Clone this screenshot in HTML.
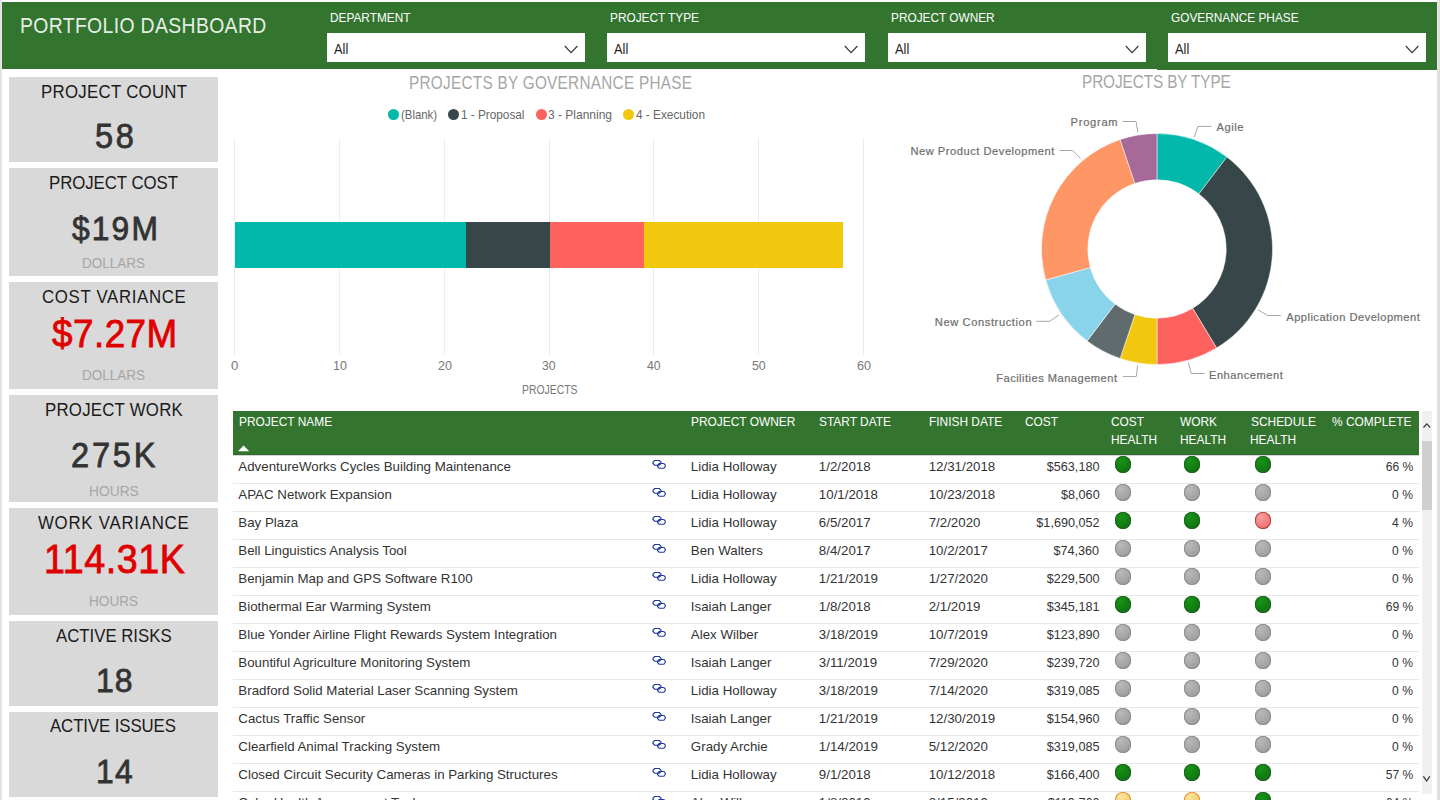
<!DOCTYPE html>
<html><head><meta charset="utf-8"><style>
html,body{margin:0;padding:0;width:1440px;height:800px;overflow:hidden;background:#fff;position:relative;font-family:"Liberation Sans", sans-serif;}
.t{position:absolute;white-space:nowrap;}
.r{position:absolute;}
</style></head><body>
<div class="r" style="left:0px;top:0px;width:1px;height:800px;background:#e0e0e0;"></div>
<div class="r" style="left:1px;top:0px;width:1px;height:800px;background:#ebe7ee;"></div>
<div class="r" style="left:1438px;top:0px;width:2px;height:70px;background:#e0e0e0;"></div>
<div class="r" style="left:1437px;top:0px;width:1px;height:70px;background:#ebe7ee;"></div>
<div class="r" style="left:1437px;top:70px;width:3px;height:730px;background:#e0e0e0;"></div>
<div class="r" style="left:2px;top:2px;width:1155px;height:67px;background:#33752f;"></div>
<div class="r" style="left:1157px;top:2px;width:280px;height:68px;background:#33752f;"></div>
<div class="t" style="left:20.05px;top:-4px;font-size:22.029px;line-height:60px;color:rgba(255,255,255,0.9);transform:scaleX(0.8800);transform-origin:0 0;letter-spacing:0.412px;">PORTFOLIO DASHBOARD</div>
<div class="t" style="left:329.65px;top:-12px;font-size:13.043px;line-height:60px;color:#fff;transform:scaleX(0.9081);transform-origin:0 0">DEPARTMENT</div>
<div class="r" style="left:327px;top:33px;width:258px;height:29px;background:#ffffff;"></div>
<div class="t" style="left:333.70px;top:20px;font-size:13.768px;line-height:60px;color:#252525;transform:scaleX(0.9314);transform-origin:0 0;">All</div>
<svg class="r" style="left:564px;top:44px" width="15" height="11"><path d="M0.8 2 L7.1 8.6 L13.4 2" fill="none" stroke="#333" stroke-width="1.1"/></svg>
<div class="t" style="left:609.65px;top:-12px;font-size:13.043px;line-height:60px;color:#fff;transform:scaleX(0.9081);transform-origin:0 0">PROJECT TYPE</div>
<div class="r" style="left:607px;top:33px;width:258px;height:29px;background:#ffffff;"></div>
<div class="t" style="left:613.70px;top:20px;font-size:13.768px;line-height:60px;color:#252525;transform:scaleX(0.9314);transform-origin:0 0;">All</div>
<svg class="r" style="left:844px;top:44px" width="15" height="11"><path d="M0.8 2 L7.1 8.6 L13.4 2" fill="none" stroke="#333" stroke-width="1.1"/></svg>
<div class="t" style="left:890.65px;top:-12px;font-size:13.043px;line-height:60px;color:#fff;transform:scaleX(0.9081);transform-origin:0 0">PROJECT OWNER</div>
<div class="r" style="left:888px;top:33px;width:258px;height:29px;background:#ffffff;"></div>
<div class="t" style="left:894.70px;top:20px;font-size:13.768px;line-height:60px;color:#252525;transform:scaleX(0.9314);transform-origin:0 0;">All</div>
<svg class="r" style="left:1125px;top:44px" width="15" height="11"><path d="M0.8 2 L7.1 8.6 L13.4 2" fill="none" stroke="#333" stroke-width="1.1"/></svg>
<div class="t" style="left:1170.65px;top:-12px;font-size:13.043px;line-height:60px;color:#fff;transform:scaleX(0.9081);transform-origin:0 0">GOVERNANCE PHASE</div>
<div class="r" style="left:1168px;top:33px;width:258px;height:29px;background:#ffffff;"></div>
<div class="t" style="left:1174.70px;top:20px;font-size:13.768px;line-height:60px;color:#252525;transform:scaleX(0.9314);transform-origin:0 0;">All</div>
<svg class="r" style="left:1405px;top:44px" width="15" height="11"><path d="M0.8 2 L7.1 8.6 L13.4 2" fill="none" stroke="#333" stroke-width="1.1"/></svg>
<div class="r" style="left:9px;top:77px;width:209px;height:85px;background:#d9d9d9;"></div>
<div class="r" style="left:9px;top:168px;width:209px;height:108px;background:#d9d9d9;"></div>
<div class="r" style="left:9px;top:282px;width:209px;height:107px;background:#d9d9d9;"></div>
<div class="r" style="left:9px;top:395px;width:209px;height:107px;background:#d9d9d9;"></div>
<div class="r" style="left:9px;top:508px;width:209px;height:107px;background:#d9d9d9;"></div>
<div class="r" style="left:9px;top:621px;width:209px;height:85px;background:#d9d9d9;"></div>
<div class="r" style="left:9px;top:712px;width:209px;height:85px;background:#d9d9d9;"></div>
<div class="t" style="left:40.55px;top:62px;font-size:18.696px;line-height:60px;color:#1a1a1a;transform:scaleX(0.9000);transform-origin:0 0;letter-spacing:0.315px;">PROJECT COUNT</div>
<div class="t" style="left:49.15px;top:153px;font-size:18.696px;line-height:60px;color:#1a1a1a;transform:scaleX(0.9000);transform-origin:0 0;letter-spacing:-0.067px;">PROJECT COST</div>
<div class="t" style="left:41.91px;top:267px;font-size:18.696px;line-height:60px;color:#1a1a1a;transform:scaleX(0.9000);transform-origin:0 0;letter-spacing:0.731px;">COST VARIANCE</div>
<div class="t" style="left:44.90px;top:380px;font-size:18.696px;line-height:60px;color:#1a1a1a;transform:scaleX(0.9000);transform-origin:0 0;letter-spacing:0.259px;">PROJECT WORK</div>
<div class="t" style="left:38.02px;top:493px;font-size:18.696px;line-height:60px;color:#1a1a1a;transform:scaleX(0.9000);transform-origin:0 0;letter-spacing:0.833px;">WORK VARIANCE</div>
<div class="t" style="left:55.80px;top:606px;font-size:18.696px;line-height:60px;color:#1a1a1a;transform:scaleX(0.9000);transform-origin:0 0;letter-spacing:-0.028px;">ACTIVE RISKS</div>
<div class="t" style="left:50.30px;top:696px;font-size:18.696px;line-height:60px;color:#1a1a1a;transform:scaleX(0.9000);transform-origin:0 0;letter-spacing:-0.108px;">ACTIVE ISSUES</div>
<div class="t" style="left:95.40px;top:106px;font-size:34.648px;line-height:60px;color:#333333;transform:scaleX(0.9400);transform-origin:0 0;letter-spacing:2.930px;-webkit-text-stroke:0.8px #333333;">58</div>
<div class="t" style="left:71.88px;top:198px;font-size:33.803px;line-height:60px;color:#333333;transform:scaleX(0.9400);transform-origin:0 0;letter-spacing:2.278px;-webkit-text-stroke:0.8px #333333;">$19M</div>
<div class="t" style="left:52.13px;top:304px;font-size:39.155px;line-height:60px;color:#e00000;transform:scaleX(0.9400);transform-origin:0 0;letter-spacing:0.525px;-webkit-text-stroke:0.8px #e00000;">$7.27M</div>
<div class="t" style="left:71.47px;top:425px;font-size:34.648px;line-height:60px;color:#333333;transform:scaleX(0.9400);transform-origin:0 0;letter-spacing:2.981px;-webkit-text-stroke:0.8px #333333;">275K</div>
<div class="t" style="left:44.08px;top:529px;font-size:40.000px;line-height:60px;color:#e00000;transform:scaleX(0.9400);transform-origin:0 0;letter-spacing:0.613px;-webkit-text-stroke:0.8px #e00000;">114.31K</div>
<div class="t" style="left:96.11px;top:650px;font-size:33.944px;line-height:60px;color:#333333;transform:scaleX(0.9400);transform-origin:0 0;letter-spacing:1.120px;-webkit-text-stroke:0.8px #333333;">18</div>
<div class="t" style="left:96.12px;top:741px;font-size:33.803px;line-height:60px;color:#333333;transform:scaleX(0.9400);transform-origin:0 0;letter-spacing:1.347px;-webkit-text-stroke:0.8px #333333;">14</div>
<div class="t" style="left:82.22px;top:233px;font-size:14.638px;line-height:60px;color:#a6a6a6;transform:scaleX(0.9224);transform-origin:0 0;">DOLLARS</div>
<div class="t" style="left:82.02px;top:345px;font-size:14.638px;line-height:60px;color:#a6a6a6;transform:scaleX(0.9224);transform-origin:0 0;">DOLLARS</div>
<div class="t" style="left:88.90px;top:461px;font-size:14.638px;line-height:60px;color:#a6a6a6;transform:scaleX(0.9429);transform-origin:0 0;">HOURS</div>
<div class="t" style="left:88.91px;top:571px;font-size:14.638px;line-height:60px;color:#a6a6a6;transform:scaleX(0.9311);transform-origin:0 0;">HOURS</div>
<div class="t" style="left:409.17px;top:53px;font-size:18.261px;line-height:60px;color:#a6a6a6;transform:scaleX(0.8400);transform-origin:0 0;letter-spacing:0.320px;">PROJECTS BY GOVERNANCE PHASE</div>
<div class="r" style="left:387.80px;top:109.10px;width:11.2px;height:11.2px;border-radius:50%;background:#01b8aa"></div>
<div class="t" style="left:400.57px;top:85px;font-size:12.464px;line-height:60px;color:#666666;transform:scaleX(0.9156);transform-origin:0 0;">(Blank)</div>
<div class="r" style="left:447.80px;top:109.10px;width:11.2px;height:11.2px;border-radius:50%;background:#374649"></div>
<div class="t" style="left:461.02px;top:85px;font-size:12.464px;line-height:60px;color:#666666;transform:scaleX(0.9452);transform-origin:0 0;">1 - Proposal</div>
<div class="r" style="left:535.70px;top:109.10px;width:11.2px;height:11.2px;border-radius:50%;background:#fd625e"></div>
<div class="t" style="left:548.27px;top:85px;font-size:12.464px;line-height:60px;color:#666666;transform:scaleX(0.9626);transform-origin:0 0;">3 - Planning</div>
<div class="r" style="left:623.00px;top:109.10px;width:11.2px;height:11.2px;border-radius:50%;background:#f2c80f"></div>
<div class="t" style="left:635.76px;top:85px;font-size:12.464px;line-height:60px;color:#666666;transform:scaleX(0.9488);transform-origin:0 0;">4 - Execution</div>
<div class="r" style="left:234px;top:138px;width:1px;height:217px;background:#ededed;"></div>
<div class="r" style="left:339px;top:138px;width:1px;height:217px;background:#ededed;"></div>
<div class="r" style="left:444px;top:138px;width:1px;height:217px;background:#ededed;"></div>
<div class="r" style="left:549px;top:138px;width:1px;height:217px;background:#ededed;"></div>
<div class="r" style="left:653px;top:138px;width:1px;height:217px;background:#ededed;"></div>
<div class="r" style="left:758px;top:138px;width:1px;height:217px;background:#ededed;"></div>
<div class="r" style="left:863px;top:138px;width:1px;height:217px;background:#ededed;"></div>
<div class="t" style="left:231.17px;top:336px;font-size:12.609px;line-height:60px;color:#777777;transform:scaleX(1.0409);transform-origin:0 0;">0</div>
<div class="t" style="left:332.76px;top:336px;font-size:12.609px;line-height:60px;color:#777777;transform:scaleX(0.9914);transform-origin:0 0;">10</div>
<div class="t" style="left:437.67px;top:336px;font-size:12.609px;line-height:60px;color:#777777;transform:scaleX(0.9981);transform-origin:0 0;">20</div>
<div class="t" style="left:542.31px;top:336px;font-size:12.609px;line-height:60px;color:#777777;transform:scaleX(0.9732);transform-origin:0 0;">30</div>
<div class="t" style="left:647.36px;top:336px;font-size:12.609px;line-height:60px;color:#777777;transform:scaleX(0.9698);transform-origin:0 0;">40</div>
<div class="t" style="left:752.01px;top:336px;font-size:12.609px;line-height:60px;color:#777777;transform:scaleX(0.9808);transform-origin:0 0;">50</div>
<div class="t" style="left:856.67px;top:336px;font-size:12.609px;line-height:60px;color:#777777;transform:scaleX(0.9981);transform-origin:0 0;">60</div>
<div class="r" style="left:235px;top:222px;width:231px;height:46px;background:#01b8aa;"></div>
<div class="r" style="left:466px;top:222px;width:84px;height:46px;background:#374649;"></div>
<div class="r" style="left:550px;top:222px;width:94px;height:46px;background:#fd625e;"></div>
<div class="r" style="left:644px;top:222px;width:199px;height:46px;background:#f2c80f;"></div>
<div class="t" style="left:521.57px;top:360px;font-size:12.754px;line-height:60px;color:#777777;transform:scaleX(0.8150);transform-origin:0 0;">PROJECTS</div>
<div class="t" style="left:1082.27px;top:52px;font-size:18.261px;line-height:60px;color:#a6a6a6;transform:scaleX(0.8400);transform-origin:0 0;letter-spacing:-0.110px;">PROJECTS BY TYPE</div>
<svg class="r" style="left:1027px;top:119.3px" width="260" height="260" viewBox="1027 119.3 260 260"><path d="M1157.00,133.80 A115.5,115.5 0 0 1 1226.90,157.35 L1198.88,194.21 A69.2,69.2 0 0 0 1157.00,180.10 Z" fill="#01b8aa" stroke="#fff" stroke-width="0.5"/><path d="M1226.90,157.35 A115.5,115.5 0 0 1 1216.55,348.27 L1192.68,308.59 A69.2,69.2 0 0 0 1198.88,194.21 Z" fill="#374649" stroke="#fff" stroke-width="0.5"/><path d="M1216.55,348.27 A115.5,115.5 0 0 1 1157.00,364.80 L1157.00,318.50 A69.2,69.2 0 0 0 1192.68,308.59 Z" fill="#fd625e" stroke="#fff" stroke-width="0.5"/><path d="M1157.00,364.80 A115.5,115.5 0 0 1 1120.12,358.75 L1134.90,314.88 A69.2,69.2 0 0 0 1157.00,318.50 Z" fill="#f2c80f" stroke="#fff" stroke-width="0.5"/><path d="M1120.12,358.75 A115.5,115.5 0 0 1 1087.10,341.25 L1115.12,304.39 A69.2,69.2 0 0 0 1134.90,314.88 Z" fill="#5f6b6d" stroke="#fff" stroke-width="0.5"/><path d="M1087.10,341.25 A115.5,115.5 0 0 1 1045.71,280.20 L1090.32,267.81 A69.2,69.2 0 0 0 1115.12,304.39 Z" fill="#8ad4eb" stroke="#fff" stroke-width="0.5"/><path d="M1045.71,280.20 A115.5,115.5 0 0 1 1120.12,139.85 L1134.90,183.72 A69.2,69.2 0 0 0 1090.32,267.81 Z" fill="#fe9666" stroke="#fff" stroke-width="0.5"/><path d="M1120.12,139.85 A115.5,115.5 0 0 1 1157.00,133.80 L1157.00,180.10 A69.2,69.2 0 0 0 1134.90,183.72 Z" fill="#a66999" stroke="#fff" stroke-width="0.5"/></svg>
<svg class="r" style="left:0;top:0" width="1440" height="800"><polyline points="1194.3,137 1197.9,126.4 1211.4,126.4" fill="none" stroke="#a6a6a6" stroke-width="1"/><polyline points="1137.8,132.4 1136.1,121.5 1122.7,121.5" fill="none" stroke="#a6a6a6" stroke-width="1"/><polyline points="1080.6,158.5 1072.7,150.5 1059.7,150.5" fill="none" stroke="#a6a6a6" stroke-width="1"/><polyline points="1058.9,314.9 1049.6,321.3 1036.2,321.3" fill="none" stroke="#a6a6a6" stroke-width="1"/><polyline points="1137.7,365.4 1136.2,376.6 1122.8,376.6" fill="none" stroke="#a6a6a6" stroke-width="1"/><polyline points="1188.3,362.7 1191.3,373.5 1204.7,373.5" fill="none" stroke="#a6a6a6" stroke-width="1"/><polyline points="1258.1,309.8 1267.7,315.5 1280.7,315.5" fill="none" stroke="#a6a6a6" stroke-width="1"/></svg>
<div class="t" style="left:1216.40px;top:97px;font-size:11.159px;line-height:60px;color:#6e6e6e;transform:scaleX(1.0000);transform-origin:0 0;letter-spacing:0.568px;-webkit-text-stroke:0.2px #6e6e6e;">Agile</div>
<div class="t" style="left:1070.61px;top:92px;font-size:11.159px;line-height:60px;color:#6e6e6e;transform:scaleX(1.0000);transform-origin:0 0;letter-spacing:0.720px;-webkit-text-stroke:0.2px #6e6e6e;">Program</div>
<div class="t" style="left:910.41px;top:121px;font-size:11.159px;line-height:60px;color:#6e6e6e;transform:scaleX(1.0000);transform-origin:0 0;letter-spacing:0.521px;-webkit-text-stroke:0.2px #6e6e6e;">New Product Development</div>
<div class="t" style="left:934.81px;top:292px;font-size:11.159px;line-height:60px;color:#6e6e6e;transform:scaleX(1.0000);transform-origin:0 0;letter-spacing:0.591px;-webkit-text-stroke:0.2px #6e6e6e;">New Construction</div>
<div class="t" style="left:996.21px;top:348px;font-size:11.159px;line-height:60px;color:#6e6e6e;transform:scaleX(1.0000);transform-origin:0 0;letter-spacing:0.468px;-webkit-text-stroke:0.2px #6e6e6e;">Facilities Management</div>
<div class="t" style="left:1209.01px;top:345px;font-size:11.159px;line-height:60px;color:#6e6e6e;transform:scaleX(1.0000);transform-origin:0 0;letter-spacing:0.499px;-webkit-text-stroke:0.2px #6e6e6e;">Enhancement</div>
<div class="t" style="left:1286.25px;top:287px;font-size:11.159px;line-height:60px;color:#6e6e6e;transform:scaleX(1.0000);transform-origin:0 0;letter-spacing:0.467px;-webkit-text-stroke:0.2px #6e6e6e;">Application Development</div>
<div class="r" style="left:233px;top:411px;width:1186px;height:44px;background:#33752f;"></div>
<div class="r" style="left:233px;top:454px;width:1186px;height:1px;background:#2b6d29;"></div>
<div class="r" style="left:233px;top:455px;width:1186px;height:1px;background:#d6d2d9;"></div>
<div class="t" style="left:238.85px;top:392px;font-size:13.188px;line-height:60px;color:#fff;transform:scaleX(0.9046);transform-origin:0 0">PROJECT NAME</div>
<div class="t" style="left:690.85px;top:392px;font-size:13.188px;line-height:60px;color:#fff;transform:scaleX(0.9046);transform-origin:0 0">PROJECT OWNER</div>
<div class="t" style="left:819.26px;top:392px;font-size:13.188px;line-height:60px;color:#fff;transform:scaleX(0.9046);transform-origin:0 0">START DATE</div>
<div class="t" style="left:928.65px;top:392px;font-size:13.188px;line-height:60px;color:#fff;transform:scaleX(0.9046);transform-origin:0 0">FINISH DATE</div>
<div class="t" style="left:1024.50px;top:392px;font-size:13.188px;line-height:60px;color:#fff;transform:scaleX(0.9046);transform-origin:0 0">COST</div>
<div class="t" style="left:1111.00px;top:392px;font-size:13.188px;line-height:60px;color:#fff;transform:scaleX(0.9046);transform-origin:0 0">COST</div>
<div class="t" style="left:1110.65px;top:410px;font-size:13.188px;line-height:60px;color:#fff;transform:scaleX(0.9046);transform-origin:0 0">HEALTH</div>
<div class="t" style="left:1180.44px;top:392px;font-size:13.188px;line-height:60px;color:#fff;transform:scaleX(0.9046);transform-origin:0 0">WORK</div>
<div class="t" style="left:1179.55px;top:410px;font-size:13.188px;line-height:60px;color:#fff;transform:scaleX(0.9046);transform-origin:0 0">HEALTH</div>
<div class="t" style="left:1250.56px;top:392px;font-size:13.188px;line-height:60px;color:#fff;transform:scaleX(0.9046);transform-origin:0 0">SCHEDULE</div>
<div class="t" style="left:1250.15px;top:410px;font-size:13.188px;line-height:60px;color:#fff;transform:scaleX(0.9046);transform-origin:0 0">HEALTH</div>
<div class="t" style="left:1332.38px;top:392px;font-size:13.188px;line-height:60px;color:#fff;transform:scaleX(0.9046);transform-origin:0 0">% COMPLETE</div>
<svg class="r" style="left:237px;top:444px" width="14" height="9"><path d="M1 7.2 L6.6 1.6 L12.2 7.2 Z" fill="#fff"/></svg>
<div class="t" style="left:238.37px;top:437px;font-size:13.3px;line-height:60px;color:#333333;">AdventureWorks Cycles Building Maintenance</div>
<svg class="r" style="left:651px;top:459px" width="16" height="12"><path d="M3.6,1.5 H8.4 L10,3.3 V4.5 L8.4,6.25 H3.6 L2,4.5 V3.3 Z M8.1,4.5 H12.9 L14.25,6.2 V7.5 L12.9,9.25 H8.1 L6.5,7.5 V6.2 Z" fill="none" stroke="#1f3c9e" stroke-width="1.15"/></svg>
<div class="t" style="left:690.87px;top:437px;font-size:13.3px;line-height:60px;color:#333333;">Lidia Holloway</div>
<div class="t" style="left:818.87px;top:437px;font-size:13.3px;line-height:60px;color:#333333;">1/2/2018</div>
<div class="t" style="left:928.67px;top:437px;font-size:13.3px;line-height:60px;color:#333333;">12/31/2018</div>
<div class="t" style="right:340.80px;text-align:right;top:437px;font-size:13.3px;line-height:60px;color:#333333;transform:scaleX(0.95);transform-origin:100% 0;">$563,180</div>
<div class="r" style="left:1115.1px;top:456.2px;width:16.4px;height:16.4px;border-radius:50%;background:radial-gradient(circle at 35% 30%, #169416 0%, #127c12 55%, #1d5e1d 100%);box-shadow:inset 0 0 0 0.8px #1f5f1f"></div>
<div class="r" style="left:1184.0px;top:456.2px;width:16.4px;height:16.4px;border-radius:50%;background:radial-gradient(circle at 35% 30%, #169416 0%, #127c12 55%, #1d5e1d 100%);box-shadow:inset 0 0 0 0.8px #1f5f1f"></div>
<div class="r" style="left:1254.8px;top:456.2px;width:16.4px;height:16.4px;border-radius:50%;background:radial-gradient(circle at 35% 30%, #169416 0%, #127c12 55%, #1d5e1d 100%);box-shadow:inset 0 0 0 0.8px #1f5f1f"></div>
<div class="t" style="right:27.20px;text-align:right;top:437px;font-size:13.3px;line-height:60px;color:#333333;transform:scaleX(0.91);transform-origin:100% 0;">66 %</div>
<div class="r" style="left:233px;top:483px;width:1186px;height:1px;background:#e8e8e8;"></div>
<div class="t" style="left:238.37px;top:465px;font-size:13.3px;line-height:60px;color:#333333;">APAC Network Expansion</div>
<svg class="r" style="left:651px;top:487px" width="16" height="12"><path d="M3.6,1.5 H8.4 L10,3.3 V4.5 L8.4,6.25 H3.6 L2,4.5 V3.3 Z M8.1,4.5 H12.9 L14.25,6.2 V7.5 L12.9,9.25 H8.1 L6.5,7.5 V6.2 Z" fill="none" stroke="#1f3c9e" stroke-width="1.15"/></svg>
<div class="t" style="left:690.87px;top:465px;font-size:13.3px;line-height:60px;color:#333333;">Lidia Holloway</div>
<div class="t" style="left:818.87px;top:465px;font-size:13.3px;line-height:60px;color:#333333;">10/1/2018</div>
<div class="t" style="left:928.67px;top:465px;font-size:13.3px;line-height:60px;color:#333333;">10/23/2018</div>
<div class="t" style="right:340.80px;text-align:right;top:465px;font-size:13.3px;line-height:60px;color:#333333;transform:scaleX(0.95);transform-origin:100% 0;">$8,060</div>
<div class="r" style="left:1115.1px;top:484.2px;width:16.4px;height:16.4px;border-radius:50%;background:radial-gradient(circle at 35% 30%, #b9b9b9 0%, #a3a3a3 60%, #8a8a8a 100%);box-shadow:inset 0 0 0 0.8px #8a8a8a"></div>
<div class="r" style="left:1184.0px;top:484.2px;width:16.4px;height:16.4px;border-radius:50%;background:radial-gradient(circle at 35% 30%, #b9b9b9 0%, #a3a3a3 60%, #8a8a8a 100%);box-shadow:inset 0 0 0 0.8px #8a8a8a"></div>
<div class="r" style="left:1254.8px;top:484.2px;width:16.4px;height:16.4px;border-radius:50%;background:radial-gradient(circle at 35% 30%, #b9b9b9 0%, #a3a3a3 60%, #8a8a8a 100%);box-shadow:inset 0 0 0 0.8px #8a8a8a"></div>
<div class="t" style="right:27.20px;text-align:right;top:465px;font-size:13.3px;line-height:60px;color:#333333;transform:scaleX(0.91);transform-origin:100% 0;">0 %</div>
<div class="r" style="left:233px;top:511px;width:1186px;height:1px;background:#e8e8e8;"></div>
<div class="t" style="left:238.37px;top:493px;font-size:13.3px;line-height:60px;color:#333333;">Bay Plaza</div>
<svg class="r" style="left:651px;top:515px" width="16" height="12"><path d="M3.6,1.5 H8.4 L10,3.3 V4.5 L8.4,6.25 H3.6 L2,4.5 V3.3 Z M8.1,4.5 H12.9 L14.25,6.2 V7.5 L12.9,9.25 H8.1 L6.5,7.5 V6.2 Z" fill="none" stroke="#1f3c9e" stroke-width="1.15"/></svg>
<div class="t" style="left:690.87px;top:493px;font-size:13.3px;line-height:60px;color:#333333;">Lidia Holloway</div>
<div class="t" style="left:818.87px;top:493px;font-size:13.3px;line-height:60px;color:#333333;">6/5/2017</div>
<div class="t" style="left:928.67px;top:493px;font-size:13.3px;line-height:60px;color:#333333;">7/2/2020</div>
<div class="t" style="right:340.80px;text-align:right;top:493px;font-size:13.3px;line-height:60px;color:#333333;transform:scaleX(0.95);transform-origin:100% 0;">$1,690,052</div>
<div class="r" style="left:1115.1px;top:512.2px;width:16.4px;height:16.4px;border-radius:50%;background:radial-gradient(circle at 35% 30%, #169416 0%, #127c12 55%, #1d5e1d 100%);box-shadow:inset 0 0 0 0.8px #1f5f1f"></div>
<div class="r" style="left:1184.0px;top:512.2px;width:16.4px;height:16.4px;border-radius:50%;background:radial-gradient(circle at 35% 30%, #169416 0%, #127c12 55%, #1d5e1d 100%);box-shadow:inset 0 0 0 0.8px #1f5f1f"></div>
<div class="r" style="left:1254.8px;top:512.2px;width:16.4px;height:16.4px;border-radius:50%;background:radial-gradient(circle at 35% 30%, #f7a0a0 0%, #f17878 60%, #d85050 100%);box-shadow:inset 0 0 0 0.8px #a04030"></div>
<div class="t" style="right:27.20px;text-align:right;top:493px;font-size:13.3px;line-height:60px;color:#333333;transform:scaleX(0.91);transform-origin:100% 0;">4 %</div>
<div class="r" style="left:233px;top:539px;width:1186px;height:1px;background:#e8e8e8;"></div>
<div class="t" style="left:238.37px;top:521px;font-size:13.3px;line-height:60px;color:#333333;">Bell Linguistics Analysis Tool</div>
<svg class="r" style="left:651px;top:543px" width="16" height="12"><path d="M3.6,1.5 H8.4 L10,3.3 V4.5 L8.4,6.25 H3.6 L2,4.5 V3.3 Z M8.1,4.5 H12.9 L14.25,6.2 V7.5 L12.9,9.25 H8.1 L6.5,7.5 V6.2 Z" fill="none" stroke="#1f3c9e" stroke-width="1.15"/></svg>
<div class="t" style="left:690.87px;top:521px;font-size:13.3px;line-height:60px;color:#333333;">Ben Walters</div>
<div class="t" style="left:818.87px;top:521px;font-size:13.3px;line-height:60px;color:#333333;">8/4/2017</div>
<div class="t" style="left:928.67px;top:521px;font-size:13.3px;line-height:60px;color:#333333;">10/2/2017</div>
<div class="t" style="right:340.80px;text-align:right;top:521px;font-size:13.3px;line-height:60px;color:#333333;transform:scaleX(0.95);transform-origin:100% 0;">$74,360</div>
<div class="r" style="left:1115.1px;top:540.2px;width:16.4px;height:16.4px;border-radius:50%;background:radial-gradient(circle at 35% 30%, #b9b9b9 0%, #a3a3a3 60%, #8a8a8a 100%);box-shadow:inset 0 0 0 0.8px #8a8a8a"></div>
<div class="r" style="left:1184.0px;top:540.2px;width:16.4px;height:16.4px;border-radius:50%;background:radial-gradient(circle at 35% 30%, #b9b9b9 0%, #a3a3a3 60%, #8a8a8a 100%);box-shadow:inset 0 0 0 0.8px #8a8a8a"></div>
<div class="r" style="left:1254.8px;top:540.2px;width:16.4px;height:16.4px;border-radius:50%;background:radial-gradient(circle at 35% 30%, #b9b9b9 0%, #a3a3a3 60%, #8a8a8a 100%);box-shadow:inset 0 0 0 0.8px #8a8a8a"></div>
<div class="t" style="right:27.20px;text-align:right;top:521px;font-size:13.3px;line-height:60px;color:#333333;transform:scaleX(0.91);transform-origin:100% 0;">0 %</div>
<div class="r" style="left:233px;top:567px;width:1186px;height:1px;background:#e8e8e8;"></div>
<div class="t" style="left:238.37px;top:549px;font-size:13.3px;line-height:60px;color:#333333;">Benjamin Map and GPS Software R100</div>
<svg class="r" style="left:651px;top:571px" width="16" height="12"><path d="M3.6,1.5 H8.4 L10,3.3 V4.5 L8.4,6.25 H3.6 L2,4.5 V3.3 Z M8.1,4.5 H12.9 L14.25,6.2 V7.5 L12.9,9.25 H8.1 L6.5,7.5 V6.2 Z" fill="none" stroke="#1f3c9e" stroke-width="1.15"/></svg>
<div class="t" style="left:690.87px;top:549px;font-size:13.3px;line-height:60px;color:#333333;">Lidia Holloway</div>
<div class="t" style="left:818.87px;top:549px;font-size:13.3px;line-height:60px;color:#333333;">1/21/2019</div>
<div class="t" style="left:928.67px;top:549px;font-size:13.3px;line-height:60px;color:#333333;">1/27/2020</div>
<div class="t" style="right:340.80px;text-align:right;top:549px;font-size:13.3px;line-height:60px;color:#333333;transform:scaleX(0.95);transform-origin:100% 0;">$229,500</div>
<div class="r" style="left:1115.1px;top:568.2px;width:16.4px;height:16.4px;border-radius:50%;background:radial-gradient(circle at 35% 30%, #b9b9b9 0%, #a3a3a3 60%, #8a8a8a 100%);box-shadow:inset 0 0 0 0.8px #8a8a8a"></div>
<div class="r" style="left:1184.0px;top:568.2px;width:16.4px;height:16.4px;border-radius:50%;background:radial-gradient(circle at 35% 30%, #b9b9b9 0%, #a3a3a3 60%, #8a8a8a 100%);box-shadow:inset 0 0 0 0.8px #8a8a8a"></div>
<div class="r" style="left:1254.8px;top:568.2px;width:16.4px;height:16.4px;border-radius:50%;background:radial-gradient(circle at 35% 30%, #b9b9b9 0%, #a3a3a3 60%, #8a8a8a 100%);box-shadow:inset 0 0 0 0.8px #8a8a8a"></div>
<div class="t" style="right:27.20px;text-align:right;top:549px;font-size:13.3px;line-height:60px;color:#333333;transform:scaleX(0.91);transform-origin:100% 0;">0 %</div>
<div class="r" style="left:233px;top:595px;width:1186px;height:1px;background:#e8e8e8;"></div>
<div class="t" style="left:238.37px;top:577px;font-size:13.3px;line-height:60px;color:#333333;">Biothermal Ear Warming System</div>
<svg class="r" style="left:651px;top:599px" width="16" height="12"><path d="M3.6,1.5 H8.4 L10,3.3 V4.5 L8.4,6.25 H3.6 L2,4.5 V3.3 Z M8.1,4.5 H12.9 L14.25,6.2 V7.5 L12.9,9.25 H8.1 L6.5,7.5 V6.2 Z" fill="none" stroke="#1f3c9e" stroke-width="1.15"/></svg>
<div class="t" style="left:690.87px;top:577px;font-size:13.3px;line-height:60px;color:#333333;">Isaiah Langer</div>
<div class="t" style="left:818.87px;top:577px;font-size:13.3px;line-height:60px;color:#333333;">1/8/2018</div>
<div class="t" style="left:928.67px;top:577px;font-size:13.3px;line-height:60px;color:#333333;">2/1/2019</div>
<div class="t" style="right:340.80px;text-align:right;top:577px;font-size:13.3px;line-height:60px;color:#333333;transform:scaleX(0.95);transform-origin:100% 0;">$345,181</div>
<div class="r" style="left:1115.1px;top:596.2px;width:16.4px;height:16.4px;border-radius:50%;background:radial-gradient(circle at 35% 30%, #169416 0%, #127c12 55%, #1d5e1d 100%);box-shadow:inset 0 0 0 0.8px #1f5f1f"></div>
<div class="r" style="left:1184.0px;top:596.2px;width:16.4px;height:16.4px;border-radius:50%;background:radial-gradient(circle at 35% 30%, #169416 0%, #127c12 55%, #1d5e1d 100%);box-shadow:inset 0 0 0 0.8px #1f5f1f"></div>
<div class="r" style="left:1254.8px;top:596.2px;width:16.4px;height:16.4px;border-radius:50%;background:radial-gradient(circle at 35% 30%, #169416 0%, #127c12 55%, #1d5e1d 100%);box-shadow:inset 0 0 0 0.8px #1f5f1f"></div>
<div class="t" style="right:27.20px;text-align:right;top:577px;font-size:13.3px;line-height:60px;color:#333333;transform:scaleX(0.91);transform-origin:100% 0;">69 %</div>
<div class="r" style="left:233px;top:623px;width:1186px;height:1px;background:#e8e8e8;"></div>
<div class="t" style="left:238.37px;top:605px;font-size:13.3px;line-height:60px;color:#333333;">Blue Yonder Airline Flight Rewards System Integration</div>
<svg class="r" style="left:651px;top:627px" width="16" height="12"><path d="M3.6,1.5 H8.4 L10,3.3 V4.5 L8.4,6.25 H3.6 L2,4.5 V3.3 Z M8.1,4.5 H12.9 L14.25,6.2 V7.5 L12.9,9.25 H8.1 L6.5,7.5 V6.2 Z" fill="none" stroke="#1f3c9e" stroke-width="1.15"/></svg>
<div class="t" style="left:690.87px;top:605px;font-size:13.3px;line-height:60px;color:#333333;">Alex Wilber</div>
<div class="t" style="left:818.87px;top:605px;font-size:13.3px;line-height:60px;color:#333333;">3/18/2019</div>
<div class="t" style="left:928.67px;top:605px;font-size:13.3px;line-height:60px;color:#333333;">10/7/2019</div>
<div class="t" style="right:340.80px;text-align:right;top:605px;font-size:13.3px;line-height:60px;color:#333333;transform:scaleX(0.95);transform-origin:100% 0;">$123,890</div>
<div class="r" style="left:1115.1px;top:624.2px;width:16.4px;height:16.4px;border-radius:50%;background:radial-gradient(circle at 35% 30%, #b9b9b9 0%, #a3a3a3 60%, #8a8a8a 100%);box-shadow:inset 0 0 0 0.8px #8a8a8a"></div>
<div class="r" style="left:1184.0px;top:624.2px;width:16.4px;height:16.4px;border-radius:50%;background:radial-gradient(circle at 35% 30%, #b9b9b9 0%, #a3a3a3 60%, #8a8a8a 100%);box-shadow:inset 0 0 0 0.8px #8a8a8a"></div>
<div class="r" style="left:1254.8px;top:624.2px;width:16.4px;height:16.4px;border-radius:50%;background:radial-gradient(circle at 35% 30%, #b9b9b9 0%, #a3a3a3 60%, #8a8a8a 100%);box-shadow:inset 0 0 0 0.8px #8a8a8a"></div>
<div class="t" style="right:27.20px;text-align:right;top:605px;font-size:13.3px;line-height:60px;color:#333333;transform:scaleX(0.91);transform-origin:100% 0;">0 %</div>
<div class="r" style="left:233px;top:651px;width:1186px;height:1px;background:#e8e8e8;"></div>
<div class="t" style="left:238.37px;top:633px;font-size:13.3px;line-height:60px;color:#333333;">Bountiful Agriculture Monitoring System</div>
<svg class="r" style="left:651px;top:655px" width="16" height="12"><path d="M3.6,1.5 H8.4 L10,3.3 V4.5 L8.4,6.25 H3.6 L2,4.5 V3.3 Z M8.1,4.5 H12.9 L14.25,6.2 V7.5 L12.9,9.25 H8.1 L6.5,7.5 V6.2 Z" fill="none" stroke="#1f3c9e" stroke-width="1.15"/></svg>
<div class="t" style="left:690.87px;top:633px;font-size:13.3px;line-height:60px;color:#333333;">Isaiah Langer</div>
<div class="t" style="left:818.87px;top:633px;font-size:13.3px;line-height:60px;color:#333333;">3/11/2019</div>
<div class="t" style="left:928.67px;top:633px;font-size:13.3px;line-height:60px;color:#333333;">7/29/2020</div>
<div class="t" style="right:340.80px;text-align:right;top:633px;font-size:13.3px;line-height:60px;color:#333333;transform:scaleX(0.95);transform-origin:100% 0;">$239,720</div>
<div class="r" style="left:1115.1px;top:652.2px;width:16.4px;height:16.4px;border-radius:50%;background:radial-gradient(circle at 35% 30%, #b9b9b9 0%, #a3a3a3 60%, #8a8a8a 100%);box-shadow:inset 0 0 0 0.8px #8a8a8a"></div>
<div class="r" style="left:1184.0px;top:652.2px;width:16.4px;height:16.4px;border-radius:50%;background:radial-gradient(circle at 35% 30%, #b9b9b9 0%, #a3a3a3 60%, #8a8a8a 100%);box-shadow:inset 0 0 0 0.8px #8a8a8a"></div>
<div class="r" style="left:1254.8px;top:652.2px;width:16.4px;height:16.4px;border-radius:50%;background:radial-gradient(circle at 35% 30%, #b9b9b9 0%, #a3a3a3 60%, #8a8a8a 100%);box-shadow:inset 0 0 0 0.8px #8a8a8a"></div>
<div class="t" style="right:27.20px;text-align:right;top:633px;font-size:13.3px;line-height:60px;color:#333333;transform:scaleX(0.91);transform-origin:100% 0;">0 %</div>
<div class="r" style="left:233px;top:679px;width:1186px;height:1px;background:#e8e8e8;"></div>
<div class="t" style="left:238.37px;top:661px;font-size:13.3px;line-height:60px;color:#333333;">Bradford Solid Material Laser Scanning System</div>
<svg class="r" style="left:651px;top:683px" width="16" height="12"><path d="M3.6,1.5 H8.4 L10,3.3 V4.5 L8.4,6.25 H3.6 L2,4.5 V3.3 Z M8.1,4.5 H12.9 L14.25,6.2 V7.5 L12.9,9.25 H8.1 L6.5,7.5 V6.2 Z" fill="none" stroke="#1f3c9e" stroke-width="1.15"/></svg>
<div class="t" style="left:690.87px;top:661px;font-size:13.3px;line-height:60px;color:#333333;">Lidia Holloway</div>
<div class="t" style="left:818.87px;top:661px;font-size:13.3px;line-height:60px;color:#333333;">3/18/2019</div>
<div class="t" style="left:928.67px;top:661px;font-size:13.3px;line-height:60px;color:#333333;">7/14/2020</div>
<div class="t" style="right:340.80px;text-align:right;top:661px;font-size:13.3px;line-height:60px;color:#333333;transform:scaleX(0.95);transform-origin:100% 0;">$319,085</div>
<div class="r" style="left:1115.1px;top:680.2px;width:16.4px;height:16.4px;border-radius:50%;background:radial-gradient(circle at 35% 30%, #b9b9b9 0%, #a3a3a3 60%, #8a8a8a 100%);box-shadow:inset 0 0 0 0.8px #8a8a8a"></div>
<div class="r" style="left:1184.0px;top:680.2px;width:16.4px;height:16.4px;border-radius:50%;background:radial-gradient(circle at 35% 30%, #b9b9b9 0%, #a3a3a3 60%, #8a8a8a 100%);box-shadow:inset 0 0 0 0.8px #8a8a8a"></div>
<div class="r" style="left:1254.8px;top:680.2px;width:16.4px;height:16.4px;border-radius:50%;background:radial-gradient(circle at 35% 30%, #b9b9b9 0%, #a3a3a3 60%, #8a8a8a 100%);box-shadow:inset 0 0 0 0.8px #8a8a8a"></div>
<div class="t" style="right:27.20px;text-align:right;top:661px;font-size:13.3px;line-height:60px;color:#333333;transform:scaleX(0.91);transform-origin:100% 0;">0 %</div>
<div class="r" style="left:233px;top:707px;width:1186px;height:1px;background:#e8e8e8;"></div>
<div class="t" style="left:238.37px;top:689px;font-size:13.3px;line-height:60px;color:#333333;">Cactus Traffic Sensor</div>
<svg class="r" style="left:651px;top:711px" width="16" height="12"><path d="M3.6,1.5 H8.4 L10,3.3 V4.5 L8.4,6.25 H3.6 L2,4.5 V3.3 Z M8.1,4.5 H12.9 L14.25,6.2 V7.5 L12.9,9.25 H8.1 L6.5,7.5 V6.2 Z" fill="none" stroke="#1f3c9e" stroke-width="1.15"/></svg>
<div class="t" style="left:690.87px;top:689px;font-size:13.3px;line-height:60px;color:#333333;">Isaiah Langer</div>
<div class="t" style="left:818.87px;top:689px;font-size:13.3px;line-height:60px;color:#333333;">1/21/2019</div>
<div class="t" style="left:928.67px;top:689px;font-size:13.3px;line-height:60px;color:#333333;">12/30/2019</div>
<div class="t" style="right:340.80px;text-align:right;top:689px;font-size:13.3px;line-height:60px;color:#333333;transform:scaleX(0.95);transform-origin:100% 0;">$154,960</div>
<div class="r" style="left:1115.1px;top:708.2px;width:16.4px;height:16.4px;border-radius:50%;background:radial-gradient(circle at 35% 30%, #b9b9b9 0%, #a3a3a3 60%, #8a8a8a 100%);box-shadow:inset 0 0 0 0.8px #8a8a8a"></div>
<div class="r" style="left:1184.0px;top:708.2px;width:16.4px;height:16.4px;border-radius:50%;background:radial-gradient(circle at 35% 30%, #b9b9b9 0%, #a3a3a3 60%, #8a8a8a 100%);box-shadow:inset 0 0 0 0.8px #8a8a8a"></div>
<div class="r" style="left:1254.8px;top:708.2px;width:16.4px;height:16.4px;border-radius:50%;background:radial-gradient(circle at 35% 30%, #b9b9b9 0%, #a3a3a3 60%, #8a8a8a 100%);box-shadow:inset 0 0 0 0.8px #8a8a8a"></div>
<div class="t" style="right:27.20px;text-align:right;top:689px;font-size:13.3px;line-height:60px;color:#333333;transform:scaleX(0.91);transform-origin:100% 0;">0 %</div>
<div class="r" style="left:233px;top:735px;width:1186px;height:1px;background:#e8e8e8;"></div>
<div class="t" style="left:238.37px;top:717px;font-size:13.3px;line-height:60px;color:#333333;">Clearfield Animal Tracking System</div>
<svg class="r" style="left:651px;top:739px" width="16" height="12"><path d="M3.6,1.5 H8.4 L10,3.3 V4.5 L8.4,6.25 H3.6 L2,4.5 V3.3 Z M8.1,4.5 H12.9 L14.25,6.2 V7.5 L12.9,9.25 H8.1 L6.5,7.5 V6.2 Z" fill="none" stroke="#1f3c9e" stroke-width="1.15"/></svg>
<div class="t" style="left:690.87px;top:717px;font-size:13.3px;line-height:60px;color:#333333;">Grady Archie</div>
<div class="t" style="left:818.87px;top:717px;font-size:13.3px;line-height:60px;color:#333333;">1/14/2019</div>
<div class="t" style="left:928.67px;top:717px;font-size:13.3px;line-height:60px;color:#333333;">5/12/2020</div>
<div class="t" style="right:340.80px;text-align:right;top:717px;font-size:13.3px;line-height:60px;color:#333333;transform:scaleX(0.95);transform-origin:100% 0;">$319,085</div>
<div class="r" style="left:1115.1px;top:736.2px;width:16.4px;height:16.4px;border-radius:50%;background:radial-gradient(circle at 35% 30%, #b9b9b9 0%, #a3a3a3 60%, #8a8a8a 100%);box-shadow:inset 0 0 0 0.8px #8a8a8a"></div>
<div class="r" style="left:1184.0px;top:736.2px;width:16.4px;height:16.4px;border-radius:50%;background:radial-gradient(circle at 35% 30%, #b9b9b9 0%, #a3a3a3 60%, #8a8a8a 100%);box-shadow:inset 0 0 0 0.8px #8a8a8a"></div>
<div class="r" style="left:1254.8px;top:736.2px;width:16.4px;height:16.4px;border-radius:50%;background:radial-gradient(circle at 35% 30%, #b9b9b9 0%, #a3a3a3 60%, #8a8a8a 100%);box-shadow:inset 0 0 0 0.8px #8a8a8a"></div>
<div class="t" style="right:27.20px;text-align:right;top:717px;font-size:13.3px;line-height:60px;color:#333333;transform:scaleX(0.91);transform-origin:100% 0;">0 %</div>
<div class="r" style="left:233px;top:763px;width:1186px;height:1px;background:#e8e8e8;"></div>
<div class="t" style="left:238.37px;top:745px;font-size:13.3px;line-height:60px;color:#333333;">Closed Circuit Security Cameras in Parking Structures</div>
<svg class="r" style="left:651px;top:767px" width="16" height="12"><path d="M3.6,1.5 H8.4 L10,3.3 V4.5 L8.4,6.25 H3.6 L2,4.5 V3.3 Z M8.1,4.5 H12.9 L14.25,6.2 V7.5 L12.9,9.25 H8.1 L6.5,7.5 V6.2 Z" fill="none" stroke="#1f3c9e" stroke-width="1.15"/></svg>
<div class="t" style="left:690.87px;top:745px;font-size:13.3px;line-height:60px;color:#333333;">Lidia Holloway</div>
<div class="t" style="left:818.87px;top:745px;font-size:13.3px;line-height:60px;color:#333333;">9/1/2018</div>
<div class="t" style="left:928.67px;top:745px;font-size:13.3px;line-height:60px;color:#333333;">10/12/2018</div>
<div class="t" style="right:340.80px;text-align:right;top:745px;font-size:13.3px;line-height:60px;color:#333333;transform:scaleX(0.95);transform-origin:100% 0;">$166,400</div>
<div class="r" style="left:1115.1px;top:764.2px;width:16.4px;height:16.4px;border-radius:50%;background:radial-gradient(circle at 35% 30%, #169416 0%, #127c12 55%, #1d5e1d 100%);box-shadow:inset 0 0 0 0.8px #1f5f1f"></div>
<div class="r" style="left:1184.0px;top:764.2px;width:16.4px;height:16.4px;border-radius:50%;background:radial-gradient(circle at 35% 30%, #169416 0%, #127c12 55%, #1d5e1d 100%);box-shadow:inset 0 0 0 0.8px #1f5f1f"></div>
<div class="r" style="left:1254.8px;top:764.2px;width:16.4px;height:16.4px;border-radius:50%;background:radial-gradient(circle at 35% 30%, #169416 0%, #127c12 55%, #1d5e1d 100%);box-shadow:inset 0 0 0 0.8px #1f5f1f"></div>
<div class="t" style="right:27.20px;text-align:right;top:745px;font-size:13.3px;line-height:60px;color:#333333;transform:scaleX(0.91);transform-origin:100% 0;">57 %</div>
<div class="r" style="left:233px;top:791px;width:1186px;height:1px;background:#e8e8e8;"></div>
<div class="t" style="left:238.37px;top:773px;font-size:13.3px;line-height:60px;color:#333333;">Cuba Health Assessment Tool</div>
<svg class="r" style="left:651px;top:795px" width="16" height="12"><path d="M3.6,1.5 H8.4 L10,3.3 V4.5 L8.4,6.25 H3.6 L2,4.5 V3.3 Z M8.1,4.5 H12.9 L14.25,6.2 V7.5 L12.9,9.25 H8.1 L6.5,7.5 V6.2 Z" fill="none" stroke="#1f3c9e" stroke-width="1.15"/></svg>
<div class="t" style="left:690.87px;top:773px;font-size:13.3px;line-height:60px;color:#333333;">Alex Wilber</div>
<div class="t" style="left:818.87px;top:773px;font-size:13.3px;line-height:60px;color:#333333;">1/8/2019</div>
<div class="t" style="left:928.67px;top:773px;font-size:13.3px;line-height:60px;color:#333333;">3/15/2019</div>
<div class="t" style="right:340.80px;text-align:right;top:773px;font-size:13.3px;line-height:60px;color:#333333;transform:scaleX(0.95);transform-origin:100% 0;">$119,760</div>
<div class="r" style="left:1115.1px;top:792.2px;width:16.4px;height:16.4px;border-radius:50%;background:radial-gradient(circle at 35% 30%, #fbe3a0 0%, #f5cf70 60%, #e0a040 100%);box-shadow:inset 0 0 0 0.8px #e08a30"></div>
<div class="r" style="left:1184.0px;top:792.2px;width:16.4px;height:16.4px;border-radius:50%;background:radial-gradient(circle at 35% 30%, #fbe3a0 0%, #f5cf70 60%, #e0a040 100%);box-shadow:inset 0 0 0 0.8px #e08a30"></div>
<div class="r" style="left:1254.8px;top:792.2px;width:16.4px;height:16.4px;border-radius:50%;background:radial-gradient(circle at 35% 30%, #169416 0%, #127c12 55%, #1d5e1d 100%);box-shadow:inset 0 0 0 0.8px #1f5f1f"></div>
<div class="t" style="right:27.20px;text-align:right;top:773px;font-size:13.3px;line-height:60px;color:#333333;transform:scaleX(0.91);transform-origin:100% 0;">64 %</div>
<div class="r" style="left:1422px;top:411px;width:10px;height:383px;background:#f0f0f0;"></div>
<div class="r" style="left:1422px;top:441px;width:10px;height:68.5px;background:#cfcfcf;"></div>
<svg class="r" style="left:1422px;top:421px" width="10" height="8"><path d="M1.5 6.5 L4.8 2.8 L8.1 6.5" fill="none" stroke="#3a3a3a" stroke-width="1.2"/></svg>
<svg class="r" style="left:1422px;top:774px" width="10" height="9"><path d="M1.4 2.3 L4.6 7 L7.8 2.3" fill="none" stroke="#333" stroke-width="1.2"/></svg>
</body></html>
